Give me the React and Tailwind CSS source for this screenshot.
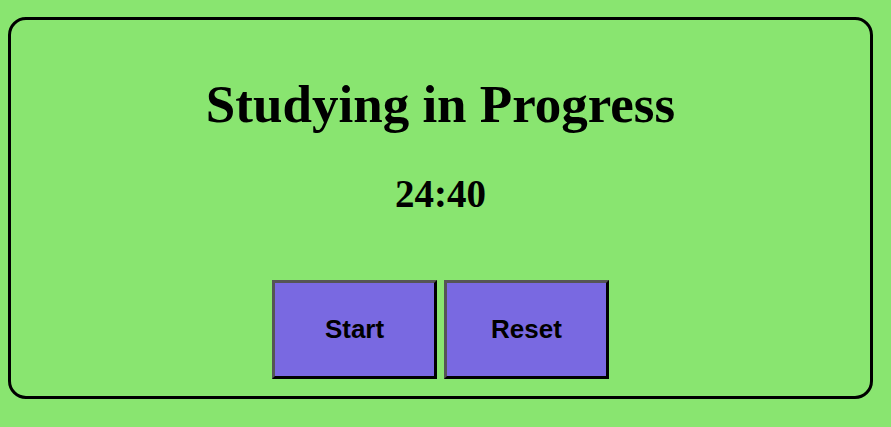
const buttonClass =
  "h-[99px] w-[165px] border-[3px] border-t-[#555555] border-r-black border-b-black border-l-[#555555] bg-[#7969e1] pb-0.5 text-[26px] leading-8 font-bold text-black";

export default function App() {
  return (
    <div className="min-h-screen bg-[#89e570] pt-[17px] pr-4.5 pb-7 pl-2 text-black">
      <main className="flex flex-col items-center rounded-[18px] border-[3px] border-black px-4 pt-13.5 pb-[17px] font-['Liberation_Serif',serif]">
        <h1 className="text-center text-[53px] leading-15 font-bold">Studying in Progress</h1>
        <h2 className="mt-9 text-[39px] leading-12 font-bold">24:40</h2>
        <div className="mt-15.5 flex gap-[7px] font-['Liberation_Sans',sans-serif]">
          <button type="button" className={buttonClass}>Start</button>
          <button type="button" className={buttonClass}>Reset</button>
        </div>
      </main>
    </div>
  );
}
